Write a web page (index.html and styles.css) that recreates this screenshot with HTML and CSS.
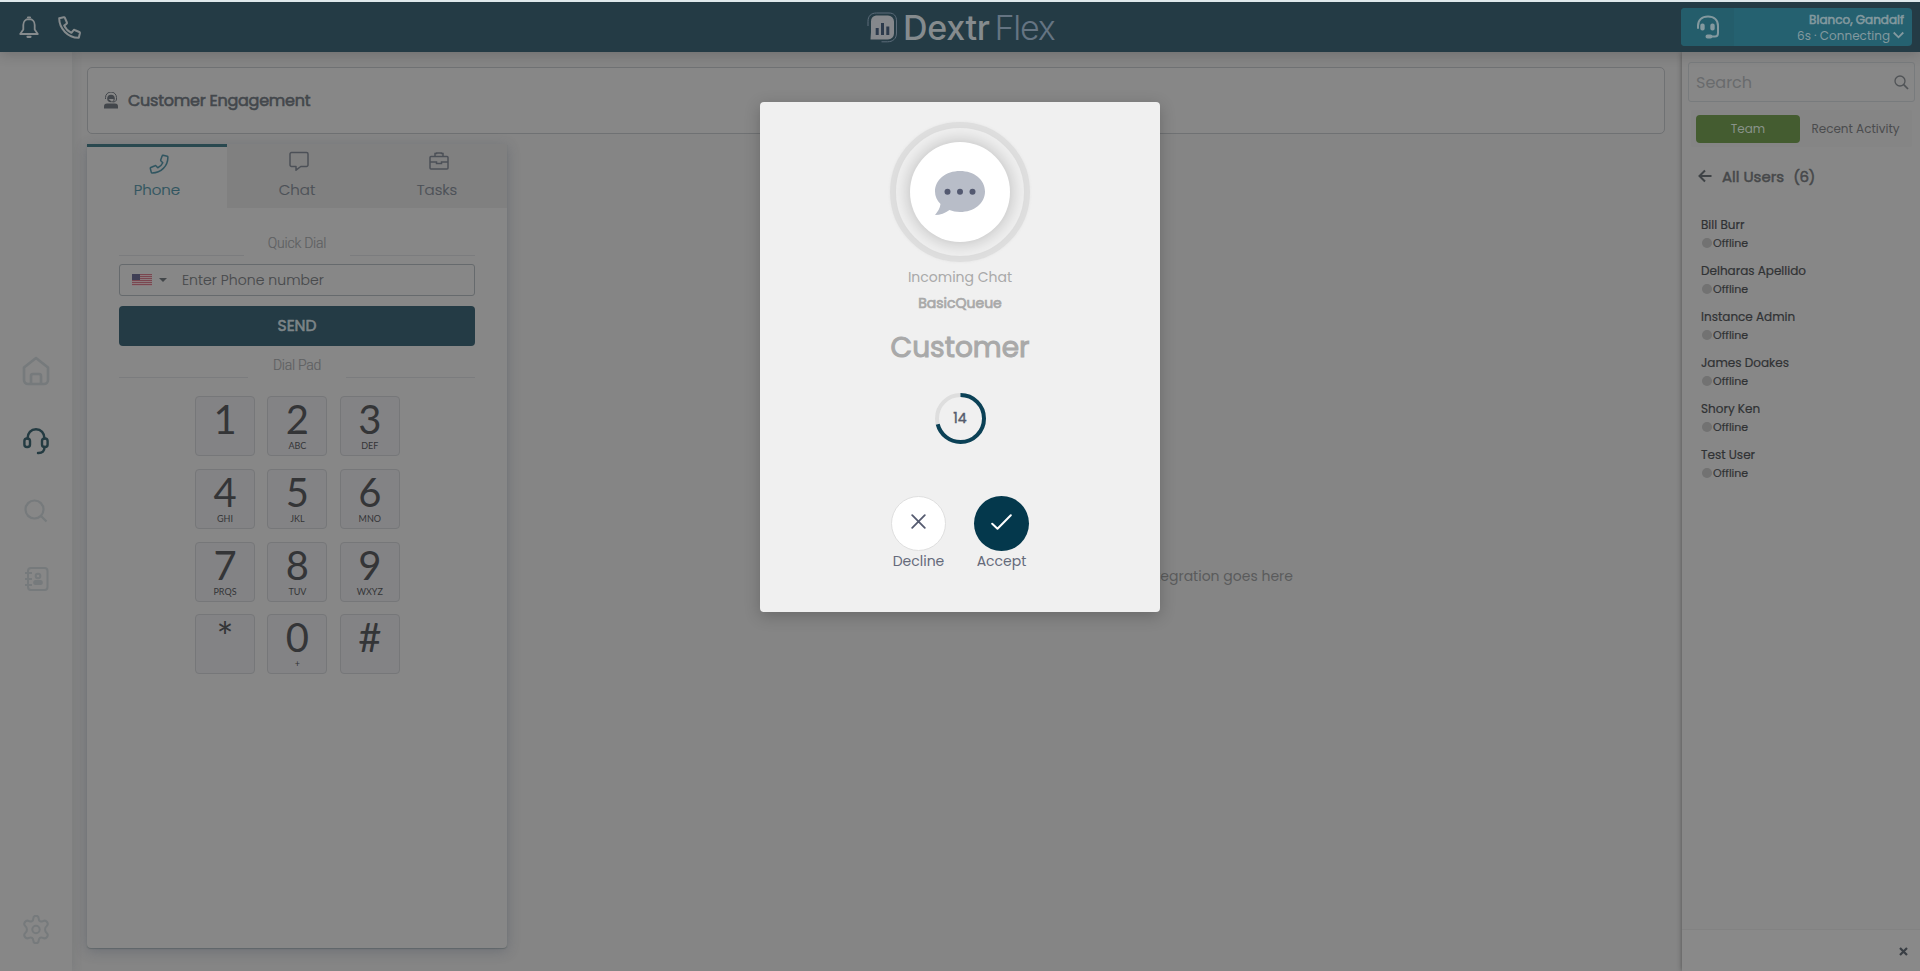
FILE: index.html
```html
<!DOCTYPE html>
<html lang="en">
<head>
<meta charset="utf-8">
<title>DextrFlex</title>
<link rel="stylesheet" href="styles.css">
</head>
<body>
<div class="app">
  <header class="topbar">
    <div class="top-icons">
      <svg class="bell" width="20" height="23" viewBox="0 0 20 23" fill="none" stroke="#868b8d" stroke-width="1.8" stroke-linejoin="round"><path d="M10 3C6.300 3 4.300 5.700 4.300 9v4.500L1.200 18h17.600l-3.100-4.500V9C15.700 5.700 13.700 3 10 3z"/><path d="M9 1.500h2M8.500 20.800h3" stroke-width="2.200" stroke-linecap="round"/></svg>
      <svg class="phone" width="23" height="23" viewBox="0 0 23 23" fill="none" stroke="#868b8d" stroke-width="2" stroke-linejoin="round"><path d="M1.200 2.300 5.700 1.200c.5-.1 1 .1 1.200.6l2 4.700c.2.400.1.900-.3 1.200L6.200 9.600c1.500 3.200 4 5.700 7.200 7.200l2-2.500c.3-.4.800-.5 1.200-.3l4.700 2c.5.200.700.7.600 1.200l-1.100 4.500C10 22 1.200 12.500 1.200 2.300z"/></svg>
    </div>
    <div class="logo">
      <svg width="31" height="31" viewBox="0 0 31 31"><path d="M9 3.500h12a6 6 0 0 1 6 6v12a6 6 0 0 1-6 6H3.500L4 20V9.500a6 6 0 0 1 5-6z" fill="#85888c"/><path d="M1 14V9.500C1 4 4 1 9.500 1H22c5 0 7.500 3 7.500 8v12c0 6-4 8.800-9 8.800h-6" fill="none" stroke="#5c6c7a" stroke-width="1"/><path d="M10.200 16v7M15.500 11v12M20.800 14.500V23" stroke="#2c3a4c" stroke-width="3"/></svg>
      <span class="logo-a">Dextr</span><span class="logo-b">Flex</span>
    </div>
    <div class="agent">
      <div class="agent-ico"><svg width="24" height="24" viewBox="0 0 24 24" fill="none" stroke="#83999f" stroke-width="2"><path d="M2 13V11C2 5 6 1.500 12 1.500S22 5 22 11v7c0 2-1 3.500-3 3.500h-5" stroke-linecap="round"/><rect x="5.300" y="9.500" width="2.400" height="5" rx="1" fill="#83999f"/><rect x="15.300" y="9.500" width="2.400" height="5" rx="1" fill="#83999f"/><rect x="10.500" y="20.500" width="5" height="2" rx="1" fill="#83999f"/></svg></div>
      <div class="agent-text"><div class="agent-name faux">Blanco, Gandalf</div><div class="agent-state"><span>6s · Connecting</span><svg width="11" height="8" viewBox="0 0 11 8" fill="none" stroke="#83999f" stroke-width="1.800"><path d="M.7 1.500 5.500 6.300 10.300 1.500"/></svg></div></div>
    </div>
  </header>

  <div class="body">
    <nav class="rail">
      <svg class="r-home" width="28" height="30" viewBox="0 0 28 30" fill="none" stroke="#767a7c" stroke-width="2.600" stroke-linejoin="round"><path d="M2 11.500 14 2l12 9.500V24a4 4 0 0 1-4 4H6a4 4 0 0 1-4-4z"/><path d="M9 28V20a2 2 0 0 1 2-2h6a2 2 0 0 1 2 2v8"/></svg>
      <svg class="r-head" width="26" height="27" viewBox="0 0 26 27" fill="none" stroke="#243b42" stroke-width="2.400" stroke-linecap="round"><path d="M4.500 10.500C4.500 5 8 1.300 13 1.300s8.500 3.700 8.500 9.200"/><rect x="1.400" y="10.500" width="5.600" height="8.500" rx="2.600"/><rect x="19" y="10.500" width="5.600" height="8.500" rx="2.600"/><path d="M21.500 19c0 4-2 6.200-6.500 6"/></svg>
      <svg class="r-search" width="24" height="24" viewBox="0 0 24 24" fill="none" stroke="#767a7c" stroke-width="2.200"><circle cx="10.500" cy="10.500" r="9"/><path d="m17 17 5.500 5.500"/></svg>
      <svg class="r-book" width="25" height="26" viewBox="0 0 25 26" fill="none" stroke="#767a7c" stroke-width="2"><rect x="4" y="2" width="19.500" height="22" rx="3"/><path d="M1 7h7M1 13h7M1 19h7"/><circle cx="14" cy="10" r="2.300"/><rect x="10.200" y="15" width="7.600" height="3" rx="1.500" fill="#767a7c"/></svg>
      <svg class="r-gear" width="26" height="29" viewBox="0 0 26 29" fill="none" stroke="#767a7c" stroke-width="2" stroke-linejoin="round"><path d="M10.300 3.500a2.700 2.700 0 0 1 5.400 0c0 2.600 2 3.700 4.200 2.600 3.500-1.700 6.500 2.800 3.600 5.200-1.900 1.500-1.900 4.900 0 6.400 2.900 2.400-.1 6.900-3.600 5.200-2.200-1.100-4.200 0-4.200 2.600a2.700 2.700 0 0 1-5.400 0c0-2.600-2-3.700-4.200-2.600-3.500 1.700-6.500-2.800-3.600-5.200 1.900-1.500 1.900-4.900 0-6.400C-.4 8.900 2.600 4.400 6.100 6.100c2.200 1.100 4.200 0 4.200-2.600z"/><circle cx="13" cy="14.500" r="3.700"/></svg>
    </nav>

    <main class="main">
      <section class="title-card">
        <svg width="14" height="17" viewBox="0 0 14 17"><path d="M1.500 7V5.500a5.500 5.500 0 0 1 11 0V7c0 2-1.500 3-4 3" fill="none" stroke="#43474c" stroke-width="1"/><circle cx="7" cy="6.500" r="3.800" fill="#43474c"/><path d="M4.500 7h5v1.500a2 2 0 0 1-2 1z" fill="#868686"/><path d="M0 16.500v-2Q0 11.500 3 11.500h8q3 0 3 3v2z" fill="#43474c"/></svg>
        <h1 class="faux">Customer Engagement</h1>
      </section>
      <div class="columns">
        <section class="panel">
          <div class="tabs">
            <div class="tab active"><svg width="20" height="20" viewBox="0 0 20 20" fill="none" stroke="#305560" stroke-width="1.500" stroke-linejoin="round"><path d="m14 1.300 4.300 1c.4.100.6.400.6.900C18.900 12 12 19 3.200 19c-.5 0-.8-.2-.9-.6l-1-3.900c-.1-.4.100-.8.500-1l4.200-1.800c.4-.2.800-.1 1.100.3l1.700 1.800c2.600-1.200 4-2.700 5-5L12 7c-.3-.3-.4-.7-.3-1.100l1.500-4.100c.1-.4.400-.6.800-.5z"/></svg><span>Phone</span></div>
            <div class="tab"><svg width="20" height="20" viewBox="0 0 20 20" fill="none" stroke="#4c5057" stroke-width="1.500" stroke-linejoin="round"><path d="M2.500 1.500h15a1.500 1.500 0 0 1 1.500 1.500v11a1.500 1.500 0 0 1-1.500 1.500h-5.700L7 19.200V15.500H2.500A1.500 1.500 0 0 1 1 14V3a1.500 1.500 0 0 1 1.500-1.500z"/></svg><span>Chat</span></div>
            <div class="tab"><svg width="20" height="20" viewBox="0 0 20 20" fill="none" stroke="#4c5057" stroke-width="1.500"><rect x="1" y="5.500" width="18" height="12.500" rx="1"/><path d="M6 5.500V2.500h1.500V2h5v.5H14v3M1 11h6.500v1.500h5V11H19"/></svg><span>Tasks</span></div>
          </div>
          <div class="dialer">
            <div class="sep quick"><i></i><span>Quick Dial</span><i></i></div>
            <div class="field"><svg width="20" height="12" viewBox="0 0 20 12"><path fill="#8b7b7e" d="M0 0h20v12H0z"/><path d="M0 .5h20M0 2.500h20M0 4.500h20M0 6.500h20M0 8.500h20M0 10.500h20" stroke="#7a4750"/><path fill="#3f3f55" d="M0 0h8v6H0z"/></svg><b class="caret"></b><span>Enter Phone number</span></div>
            <button class="send faux">SEND</button>
            <div class="sep pad"><i></i><span>Dial Pad</span><i></i></div>
            <div class="keys">
              <div class="key">1</div><div class="key">2<small>ABC</small></div><div class="key">3<small>DEF</small></div>
              <div class="key">4<small>GHI</small></div><div class="key">5<small>JKL</small></div><div class="key">6<small>MNO</small></div>
              <div class="key">7<small>PRQS</small></div><div class="key">8<small>TUV</small></div><div class="key">9<small>WXYZ</small></div>
              <div class="key">*</div><div class="key">0<small>+</small></div><div class="key">#</div>
            </div>
          </div>
        </section>
        <section class="crm">CRM Integration goes here</section>
      </div>
    </main>

    <aside class="side">
      <div class="side-main">
        <div class="search"><span>Search</span><svg width="15" height="15" viewBox="0 0 15 15" fill="none" stroke="#505356" stroke-width="1.300"><circle cx="6" cy="6" r="5"/><path d="m9.700 9.700 4.300 4.300" stroke-width="1.700"/></svg></div>
        <div class="switch"><div class="on">Team</div><div class="off">Recent Activity</div></div>
        <div class="group faux"><svg width="14" height="14" viewBox="0 0 14 14" fill="none" stroke="#3f4346" stroke-width="2"><path d="M13.500 7H2M7 1.500 1.500 7 7 12.500"/></svg><span class="group-name">All Users</span><span class="group-count">(6)</span></div>
        <ul class="users">
          <li><span>Bill Burr</span><em><i></i>Offline</em></li>
          <li><span>Delharas Apellido</span><em><i></i>Offline</em></li>
          <li><span>Instance Admin</span><em><i></i>Offline</em></li>
          <li><span>James Doakes</span><em><i></i>Offline</em></li>
          <li><span>Shory Ken</span><em><i></i>Offline</em></li>
          <li><span>Test User</span><em><i></i>Offline</em></li>
        </ul>
      </div>
      <div class="side-foot"><svg width="9" height="9" viewBox="0 0 9 9" stroke="#3a3f45" stroke-width="2.200"><path d="m1 1 7 7M8 1 1 8"/></svg></div>
    </aside>
  </div>

  <div class="modal">
    <div class="ring"><div class="disc"><svg width="50" height="44" viewBox="0 0 50 44"><path d="M25 0c14 0 25 8.500 25 20.500S39 41 25 41c-4 0-7.500-.7-10.500-2C10.500 42 5 44 0 44c3-3.500 5-7 5.500-11C2 29.500 0 25.500 0 20.500 0 8.500 11 0 25 0z" fill="#b8bdc8"/><g fill="#535970"><circle cx="12.500" cy="20.700" r="3"/><circle cx="25" cy="20.700" r="3"/><circle cx="37.500" cy="20.700" r="3"/></g></svg></div></div>
    <div class="incoming">Incoming Chat</div>
    <div class="queue faux">BasicQueue</div>
    <div class="who">Customer</div>
    <div class="timer"><svg width="51" height="51" viewBox="0 0 51 51" fill="none" stroke-width="4"><circle cx="25.500" cy="25.500" r="23.500" stroke="#dedede"/><circle cx="25.500" cy="25.500" r="23.500" stroke="#0b4156" pathLength="100" stroke-dasharray="71 29" transform="rotate(-90 25.500 25.500)"/></svg><span class="count">14</span></div>
    <div class="actions">
      <div class="act"><div class="btn no"><svg width="15" height="15" viewBox="0 0 15 15" stroke="#555b70" stroke-width="1.800" stroke-linecap="round"><path d="m1.200 1.200 12.600 12.600M13.800 1.200 1.200 13.800"/></svg></div><span>Decline</span></div>
      <div class="act"><div class="btn yes"><svg width="21" height="16" viewBox="0 0 21 16" fill="none" stroke="#fff" stroke-width="2" stroke-linecap="round" stroke-linejoin="round"><path d="m1.200 9.700 5.300 5L19.800 1.200"/></svg></div><span>Accept</span></div>
    </div>
  </div>
</div>
</body>
</html>
```
FILE: styles.css
```css
* { box-sizing: border-box; }
body { margin: 0; background: #858585; font-family: Poppins, Inter, "Noto Sans", sans-serif; color: #3b3d40; }
svg { display: block; flex: none; }
.faux { -webkit-text-stroke: .6px currentColor; }
.app { position: relative; height: 971px; display: flex; flex-direction: column; border-top: 2px solid #dfe8eb; overflow: hidden; white-space: nowrap; }
.topbar { position: relative; z-index: 2; flex: none; height: 50px; background: #243b45; display: grid; grid-template-columns: 1fr auto 1fr; align-items: center; box-shadow: 0 3px 12px rgba(0,0,0,.16); }
.top-icons { display: flex; align-items: center; gap: 19px; padding-left: 19px; }
.logo { display: flex; align-items: center; width: 186px; height: 50px; font: 500 34px/50px Inter, sans-serif; }
.logo-a { color: #858b8e; margin-left: 5px; letter-spacing: -.3px; }
.logo-b { color: #657482; font-weight: 300; margin-left: 5px; letter-spacing: -1.200px; }
.logo span { padding-top: 1px; }
.agent { justify-self: end; margin-right: 8px; width: 231px; height: 38px; border-radius: 4px; background: #256170; display: flex; overflow: hidden; }
.agent-ico { width: 53px; background: #245d6b; display: flex; align-items: center; justify-content: center; }
.agent-text { flex: 1; padding: 4px 8px 0 0; color: #83999f; text-align: right; font-size: 12px; line-height: 15px; }
.agent-state { display: flex; justify-content: flex-end; align-items: center; gap: 3px; margin-top: .5px; }
.body { flex: 1; display: flex; min-height: 0; }
.rail { width: 72px; background: #878787; display: flex; flex-direction: column; align-items: center; padding: 304px 0 27px; box-shadow: 0 0 10px rgba(60,70,85,.18); }
.r-head { margin-top: 42px; }
.r-search { margin-top: 44px; }
.r-book { margin-top: 43px; }
.r-gear { margin-top: auto; margin-left: -1px; }
.main { flex: 1; padding: 15px 17px 23px 15px; display: flex; flex-direction: column; gap: 10px; }
.title-card { flex: none; height: 67px; border: 1px solid #6f7173; border-radius: 5px; background: #878787; display: flex; align-items: center; padding-left: 16px; gap: 10px; }
.title-card h1 { margin: 0; font-size: 16px; letter-spacing: -.24px; font-weight: 400; color: #43474c; }
.columns { flex: 1; display: flex; }
.panel { width: 420px; background: #878787; border-radius: 0 0 4px 4px; box-shadow: 0 3px 13px rgba(50,60,80,.3), 0 1px 1px rgba(50,70,65,.3); }
.tabs { display: flex; height: 64px; }
.tab { width: 140px; padding-top: 7px; background: #808080; display: flex; flex-direction: column; align-items: center; color: #4c5057; font-size: 15px; font-weight: 300; line-height: 24px; -webkit-text-stroke: .2px currentColor; }
.tab svg { height: 20px; margin: 0 0 7px 4px; }
.tab.active { background: #878787; border-top: 3px solid #29484f; color: #305560; }
.tab.active svg { margin-bottom: 4px; }
.dialer { padding: 24px 32px 0; display: flex; flex-direction: column; }
.sep { height: 24px; display: flex; align-items: flex-start; justify-content: space-between; font: 300 14px/22px Roboto, sans-serif; letter-spacing: -.25px; color: #5e6062; -webkit-text-stroke: .15px currentColor; }
.sep i { width: 125px; height: 1px; background: #7b7c7e; margin-top: 23px; }
.pad i { width: 129px; }
.field { margin-top: 8px; height: 32px; border: 1px solid #666a6d; border-radius: 3px; display: flex; align-items: center; padding-left: 12px; font-size: 14px; font-weight: 300; letter-spacing: .06px; color: #484a4c; -webkit-text-stroke: .1px currentColor; }
.caret { border: 4px solid transparent; border-top: 4px solid #43474a; border-bottom: 0; margin: 0 15px 0 7px; }
.send { margin-top: 10px; height: 40px; padding: 0; border: 0; border-radius: 4px; background: #243b45; color: #7d8588; font: 400 15.500px/20px Poppins, sans-serif; }
.pad { margin-top: 8px; }
.keys { margin: 18px 0 0 76px; display: grid; grid-template-columns: 60px 60px 60px; grid-auto-rows: 60px; gap: 12.800px 12.400px; font-family: Lato, sans-serif; }
.key { border: 1px solid #767779; border-radius: 4px; background: #838385; font-size: 40px; line-height: 45px; text-align: center; color: #343537; }
.key small { display: block; font-size: 9px; line-height: 10px; margin-top: -1px; }
.crm { flex: 1; padding: 422px 372px 0 0; text-align: right; font-size: 14px; font-weight: 400; color: #5a5b5c; line-height: 20px; }
.side { width: 238px; background: #878787; display: flex; flex-direction: column; box-shadow: 0 0 5px rgba(0,0,0,.4); }
.side-main { flex: 1; padding: 10px 5px 0 6px; }
.search { height: 40px; border: 1px solid #787b7d; border-radius: 3px; display: flex; justify-content: space-between; align-items: center; padding: 0 5px 0 7px; font-size: 16px; color: #696b6d; }
.switch { margin: 8px 3px 0; height: 37px; background: #858585; border-radius: 3px; padding: 4px 5px; display: flex; align-items: center; font-size: 12px; line-height: 28px; }
.on { width: 104px; background: #445c30; border-radius: 4px; text-align: center; color: #89938a; }
.off { flex: 1; padding-left: 4px; text-align: center; color: #4b4c4e; }
.group { display: flex; align-items: center; margin: 17px 10px 0; height: 24px; font-size: 15px; color: #46484a; -webkit-text-stroke-width: .5px; }
.group-name { margin: 0 9px 0 10px; }
.group-count { letter-spacing: -.5px; }
.users { list-style: none; margin: 27px 0 0 13px; padding: 0; color: #303234; font-size: 12px; -webkit-text-stroke: .2px currentColor; }
.users li { height: 46px; line-height: 20px; }
.users em { display: flex; align-items: center; font-style: normal; font-size: 11px; line-height: 16px; }
.users i { width: 10px; height: 10px; border-radius: 50%; background: #727272; margin: 0 1px 0 1px; }
.side-foot { height: 42px; background: #898989; border-top: 1px solid #828282; padding: 17px 12px 0; display: flex; justify-content: flex-end; }
.modal { position: absolute; z-index: 5; left: 760px; top: 100px; width: 400px; height: 510px; border-radius: 4px; background: #f0f0f0; box-shadow: 0 4px 16px rgba(0,0,0,.22); display: flex; flex-direction: column; align-items: center; padding-top: 20px; color: #a9a9a9; }
.ring { width: 140px; height: 140px; flex: none; border-radius: 50%; border: 6px solid #dedede; display: flex; align-items: center; justify-content: center; box-shadow: 0 0 3px #e4e4e4; }
.disc { width: 100px; height: 100px; border-radius: 50%; background: #fff; box-shadow: 0 0 18px rgba(0,0,0,.24); display: flex; align-items: center; justify-content: center; padding-top: 2px; }
.incoming { margin-top: 5px; font-size: 14px; line-height: 20px; }
.queue { margin-top: 6px; font-size: 14px; line-height: 20px; -webkit-text-stroke-width: .7px; }
.who { margin-top: 15px; font-size: 28px; line-height: 40px; -webkit-text-stroke: 1px currentColor; }
.timer { margin: 25px 0 0 1px; display: grid; place-items: center; }
.timer > * { grid-area: 1/1; }
.count { font-size: 14px; color: #555b6b; margin-right: 1px; -webkit-text-stroke: .4px currentColor; }
.actions { display: flex; gap: 28px; margin-top: 52px; }
.act { width: 55px; display: flex; flex-direction: column; align-items: center; color: #656a7a; font-size: 14px; line-height: 20px; }
.btn { width: 55px; height: 55px; border-radius: 50%; display: flex; justify-content: center; align-items: center; padding-bottom: 4px; }
.no { background: #fff; border: 1px solid #dfdfdf; }
.yes { background: #04384c; }
```
